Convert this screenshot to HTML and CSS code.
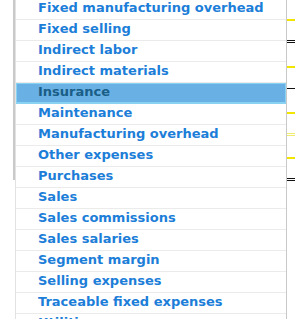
FILE: index.html
```html
<!DOCTYPE html>
<html lang="en">
<head>
    <meta charset="UTF-8">
    <title>Account picker</title>
    <link rel="stylesheet" href="styles.css">
</head>
<body>
    <div class="stage">
        <div class="backdrop-edge"></div>
        <ul class="picker">
            <li>Fixed manufacturing overhead</li>
            <li>Fixed selling</li>
            <li>Indirect labor</li>
            <li>Indirect materials</li>
            <li class="selected">Insurance</li>
            <li>Maintenance</li>
            <li>Manufacturing overhead</li>
            <li>Other expenses</li>
            <li>Purchases</li>
            <li>Sales</li>
            <li>Sales commissions</li>
            <li>Sales salaries</li>
            <li>Segment margin</li>
            <li>Selling expenses</li>
            <li>Traceable fixed expenses</li>
            <li>Utilities</li>
        </ul>
        <div class="chart-peek">
            <span class="tick yellow" style="top: 20px"></span>
            <span class="tick black" style="top: 41px"></span>
            <span class="tick black" style="top: 43px"></span>
            <span class="tick yellow" style="top: 67px"></span>
            <span class="tick black" style="top: 89px"></span>
            <span class="tick yellow" style="top: 113px"></span>
            <span class="tick pale" style="top: 134px"></span>
            <span class="tick pale" style="top: 136px"></span>
            <span class="tick yellow" style="top: 158px"></span>
            <span class="tick black" style="top: 179px"></span>
            <span class="tick black" style="top: 181px"></span>
        </div>
    </div>
</body>
</html>
```

FILE: styles.css
```css
html, body { margin: 0; padding: 0; background-color: #fff; overflow: hidden; height: 319px; }
.stage { display: flex; align-items: flex-start; padding-left: 13px; margin-top: -1px; }
.backdrop-edge { width: 2px; height: 181px; background-color: #c9c9c9; flex: none; }
.picker { list-style: none; margin: 0; padding: 0; width: 270px; flex: none; border-left: 1px solid #e2e2e2; border-right: 1px solid #c8c8c8; background-color: #fff; }
.picker li { font-family: "DejaVu Sans", Verdana, sans-serif; font-weight: bold; font-size: 13px; line-height: 16px; padding: 1px 0 3px 22px; border-bottom: 1px solid #ebebeb; color: #1c7ed8; white-space: nowrap; overflow: hidden; }
.picker li.selected { background-color: #69b1e5; color: #1a5d86; box-shadow: inset 0 0 0 1px #8ad2f2; border-bottom-color: #8ad2f2; }
.chart-peek { position: relative; width: 8px; height: 320px; flex: none; }
.tick { position: absolute; left: 0; width: 8px; height: 1px; }
.tick.yellow { background-color: #f2e600; height: 2px; }
.tick.pale { background-color: #f0ec70; }
.tick.black { background-color: #111; }
```
